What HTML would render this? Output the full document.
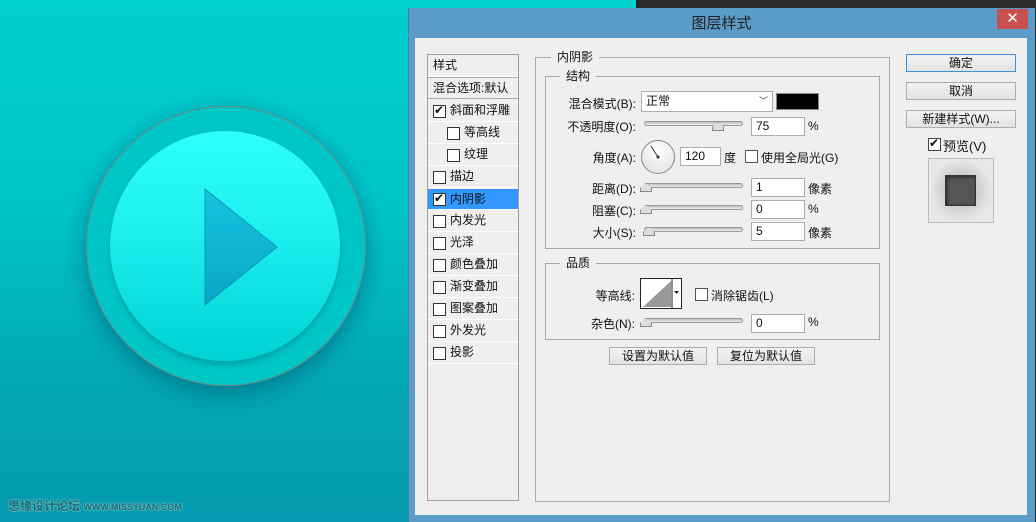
<!DOCTYPE html>
<html><head><meta charset="utf-8"><style>
*{margin:0;padding:0;box-sizing:border-box}
body{width:1036px;height:522px;overflow:hidden;position:relative;font-family:"Liberation Sans","Noto Sans CJK SC",sans-serif;font-size:12px;color:#111;background:linear-gradient(#00cfcf 0%,#00c4c8 40%,#03a6b3 75%,#059aaf 100%)}
.a{position:absolute}
.lbl{position:absolute;text-align:right;white-space:nowrap}
.in{position:absolute;background:#fff;border:1px solid #adadad;height:19px;padding-left:4px;line-height:17px;font-size:12px}
.sl{position:absolute;height:5px;border:1px solid #999;border-radius:3px;background:linear-gradient(#bbb,#eee)}
.tb{position:absolute;width:12px;height:9px;background:#ddd;border:1px solid #888;clip-path:polygon(50% 0,100% 55%,100% 100%,0 100%,0 55%)}
.cb{position:absolute;width:13px;height:13px;border:1px solid #333;background:#fff}
.ck{position:absolute;font-family:"DejaVu Sans",sans-serif;font-size:12px}
.btn{position:absolute;border:1px solid #adadad;background:linear-gradient(#f2f2f2,#e3e3e3);text-align:center;line-height:16px;font-size:12px}
.li{position:absolute;left:428px;width:90px;height:22px;border-bottom:1px solid #fff;line-height:21px}
.gb{position:absolute;border:1px solid #aaa}
.gt{position:absolute;background:#efefef;padding:0 6px;line-height:14px}
</style></head><body>
<div class="a" style="left:60px;top:90px;width:330px;height:330px;border-radius:50%;background:radial-gradient(circle,rgba(0,140,160,.45) 55%,rgba(0,140,160,0) 70%)"></div>
<div class="a" style="left:86px;top:106px;width:280px;height:280px;border-radius:50%;background:#00c6c6;border:1px solid #6a8a8a;box-shadow:0 8px 14px rgba(0,90,110,.35)"></div>
<div class="a" style="left:110px;top:131px;width:230px;height:230px;border-radius:50%;background:linear-gradient(#2dffff,#1ff0f0 40%,#00d2d4);box-shadow:0 4px 6px rgba(0,120,130,.45)"></div>
<svg class="a" style="left:0;top:0" width="400" height="400"><defs><linearGradient id="t" x1="0" y1="0" x2="0" y2="1"><stop offset="0" stop-color="#17c3e0"/><stop offset="1" stop-color="#0aa5c6"/></linearGradient></defs><polygon points="205,189 277,247 205,305" fill="url(#t)" stroke="#0b9ab5" stroke-width="1"/></svg>
<div class="a" style="left:8px;top:497px;color:#1d6a74;font-size:12px;font-weight:bold;text-shadow:-1px 0 #4fb8c2,1px 0 #4fb8c2,0 1px #4fb8c2,0 -1px #4fb8c2">思缘设计论坛 <span style="font-size:9px">WWW.MISSYUAN.COM</span></div>
<div class="a" style="left:636px;top:0;width:400px;height:10px;background:#2a2a2a"></div>
<div class="a" style="left:408px;top:8px;width:627px;height:514px;background:#5b9bc7;border-left:1px solid #4a7fa5"></div>
<div class="a" style="left:1035px;top:8px;width:1px;height:514px;background:#333"></div>
<div class="a" style="left:408px;top:12px;width:627px;text-align:center;font-size:15px;color:#222">图层样式</div>
<div class="a" style="left:997px;top:9px;width:31px;height:20px;background:#c75050;color:#fff;text-align:center;font-size:15px;line-height:20px">✕</div>
<div class="a" style="left:415px;top:38px;width:612px;height:477px;background:#efefef"></div>
<div class="a" style="left:427px;top:54px;width:92px;height:447px;border:1px solid #a0a0a0;background:#efefef"></div>
<div class="li" style="top:55px;padding-left:5px;height:22px">样式</div>
<div class="li" style="top:77px;padding-left:5px;border-top:1px solid #aaa;border-bottom:1px solid #aaa">混合选项:默认</div>
<div class="li" style="top:100px;padding-left:22px">斜面和浮雕</div><div class="cb" style="left:433px;top:105px"></div><div class="ck" style="left:434px;top:103px">✔</div>
<div class="li" style="top:122px;padding-left:36px">等高线</div><div class="cb" style="left:447px;top:127px"></div>
<div class="li" style="top:144px;padding-left:36px">纹理</div><div class="cb" style="left:447px;top:149px"></div>
<div class="li" style="top:166px;padding-left:22px">描边</div><div class="cb" style="left:433px;top:171px"></div>
<div class="li" style="top:189px;padding-left:22px;background:#3399ff;height:21px">内阴影</div><div class="cb" style="left:433px;top:193px"></div><div class="ck" style="left:434px;top:191px">✔</div>
<div class="li" style="top:210px;padding-left:22px">内发光</div><div class="cb" style="left:433px;top:215px"></div>
<div class="li" style="top:232px;padding-left:22px">光泽</div><div class="cb" style="left:433px;top:237px"></div>
<div class="li" style="top:254px;padding-left:22px">颜色叠加</div><div class="cb" style="left:433px;top:259px"></div>
<div class="li" style="top:276px;padding-left:22px">渐变叠加</div><div class="cb" style="left:433px;top:281px"></div>
<div class="li" style="top:298px;padding-left:22px">图案叠加</div><div class="cb" style="left:433px;top:303px"></div>
<div class="li" style="top:320px;padding-left:22px">外发光</div><div class="cb" style="left:433px;top:325px"></div>
<div class="li" style="top:342px;padding-left:22px">投影</div><div class="cb" style="left:433px;top:347px"></div>
<div class="gb" style="left:535px;top:57px;width:355px;height:445px"></div>
<div class="gt" style="left:551px;top:50px">内阴影</div>
<div class="gb" style="left:545px;top:76px;width:335px;height:173px"></div>
<div class="gt" style="left:560px;top:69px">结构</div>
<div class="lbl" style="right:400px;top:95px">混合模式(B):</div>
<div class="in" style="left:641px;top:91px;width:132px;height:21px;line-height:19px">正常<span style="position:absolute;right:4px;font-size:9px;color:#444">﹀</span></div>
<div class="a" style="left:776px;top:93px;width:43px;height:17px;background:#000;border:1px solid #888"></div>
<div class="lbl" style="right:400px;top:118px">不透明度(O):</div>
<div class="sl" style="left:644px;top:121px;width:99px"></div>
<div class="tb" style="left:712px;top:122px"></div>
<div class="in" style="left:751px;top:117px;width:54px">75</div><div class="a" style="left:808px;top:119px">%</div>
<div class="lbl" style="right:400px;top:149px">角度(A):</div>
<div class="a" style="left:641px;top:140px;width:34px;height:34px;border-radius:50%;border:1px solid #888;background:radial-gradient(circle at 50% 30%,#fff,#ddd)"></div>
<svg class="a" style="left:641px;top:140px" width="34" height="34"><line x1="17" y1="17" x2="10" y2="6" stroke="#333" stroke-width="1"/><circle cx="17" cy="17" r="1.5" fill="#333"/></svg>
<div class="in" style="left:680px;top:147px;width:41px">120</div>
<div class="a" style="left:724px;top:149px">度</div>
<div class="cb" style="left:745px;top:150px;border-color:#555"></div>
<div class="a" style="left:761px;top:149px">使用全局光(G)</div>
<div class="lbl" style="right:400px;top:180px">距离(D):</div>
<div class="sl" style="left:644px;top:183px;width:99px"></div><div class="tb" style="left:640px;top:183px"></div>
<div class="in" style="left:751px;top:178px;width:54px">1</div><div class="a" style="left:808px;top:180px">像素</div>
<div class="lbl" style="right:400px;top:202px">阻塞(C):</div>
<div class="sl" style="left:644px;top:205px;width:99px"></div><div class="tb" style="left:640px;top:205px"></div>
<div class="in" style="left:751px;top:200px;width:54px">0</div><div class="a" style="left:808px;top:202px">%</div>
<div class="lbl" style="right:400px;top:224px">大小(S):</div>
<div class="sl" style="left:644px;top:227px;width:99px"></div><div class="tb" style="left:643px;top:227px"></div>
<div class="in" style="left:751px;top:222px;width:54px">5</div><div class="a" style="left:808px;top:224px">像素</div>
<div class="gb" style="left:545px;top:263px;width:335px;height:77px"></div>
<div class="gt" style="left:560px;top:256px">品质</div>
<div class="lbl" style="right:401px;top:287px">等高线:</div>
<div class="a" style="left:640px;top:278px;width:42px;height:31px;border:1px solid #222;background:#fff"></div>
<svg class="a" style="left:641px;top:279px" width="40" height="29"><polygon points="2,28 30,2 30,28" fill="#999"/><line x1="31" y1="0" x2="31" y2="29" stroke="#222"/><polygon points="33,12 38,12 35.5,15" fill="#222"/></svg>
<div class="cb" style="left:695px;top:288px;border-color:#555"></div>
<div class="a" style="left:711px;top:287px">消除锯齿(L)</div>
<div class="lbl" style="right:401px;top:315px">杂色(N):</div>
<div class="sl" style="left:644px;top:318px;width:99px"></div><div class="tb" style="left:640px;top:318px"></div>
<div class="in" style="left:751px;top:314px;width:54px">0</div><div class="a" style="left:808px;top:315px">%</div>
<div class="btn" style="left:609px;top:347px;width:98px;height:18px">设置为默认值</div>
<div class="btn" style="left:717px;top:347px;width:98px;height:18px">复位为默认值</div>
<div class="btn" style="left:906px;top:54px;width:110px;height:18px;border-color:#3c8fd8">确定</div>
<div class="btn" style="left:906px;top:82px;width:110px;height:18px">取消</div>
<div class="btn" style="left:906px;top:110px;width:110px;height:18px">新建样式(W)...</div>
<div class="cb" style="left:928px;top:138px;border-color:#444"></div><div class="ck" style="left:929px;top:136px">✔</div>
<div class="a" style="left:943px;top:136px;font-size:13px">预览(V)</div>
<div class="a" style="left:928px;top:158px;width:66px;height:65px;border:1px solid #bbb;background:radial-gradient(circle,#c8c8c8 30%,#e8e8e8 70%)"></div>
<div class="a" style="left:945px;top:175px;width:31px;height:31px;background:#555;border:1px solid #333;box-shadow:inset 1px 1px 3px #222"></div>
</body></html>
